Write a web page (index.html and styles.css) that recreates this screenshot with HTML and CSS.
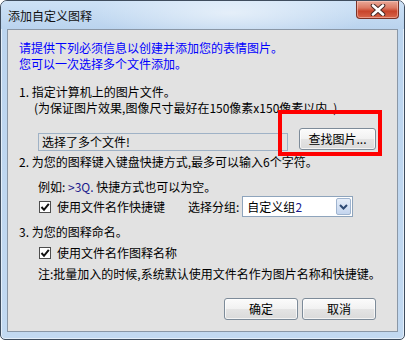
FILE: index.html
```html
<!DOCTYPE html>
<html lang="zh-CN">
<head>
<meta charset="utf-8">
<link rel="stylesheet" href="styles.css">
</head>
<body>
<div class="window">
  <div class="titlebar">
    <span class="title">添加自定义图释</span>
    <span class="close">
      <svg width="16" height="12" viewBox="0 0 16 12">
        <path d="M3 1.5 L13 10.5 M13 1.5 L3 10.5" stroke="#4a2a26" stroke-width="4.6" stroke-linecap="round"/>
        <path d="M3 1.5 L13 10.5 M13 1.5 L3 10.5" stroke="#ffffff" stroke-width="2.6" stroke-linecap="round"/>
      </svg>
    </span>
  </div>
  <div class="panel">
    <div class="intro">请提供下列必须信息以创建并添加您的表情图片。<br>您可以一次选择多个文件添加。</div>
    <div class="step s1">1. 指定计算机上的图片文件。</div>
    <div class="note">(为保证图片效果,图像尺寸最好在150像素x150像素以内。)</div>
    <div class="filerow">
      <div class="field">选择了多个文件!</div>
      <div class="btn browse">查找图片...</div>
    </div>
    <div class="step s2">2. 为您的图释键入键盘快捷方式,最多可以输入6个字符。</div>
    <div class="example">例如: <span class="code">&gt;3Q.</span> 快捷方式也可以为空。</div>
    <div class="optrow">
      <span class="check"><svg width="10" height="10" viewBox="0 0 10 10"><path d="M1.5 5 L4 7.8 L8.8 1.8" stroke="#111" stroke-width="2" fill="none"/></svg></span>
      <span class="label">使用文件名作快捷键</span>
      <span class="grouplabel">选择分组:</span>
      <div class="select">
        <span class="seltext">自定义组<span class="num">2</span></span>
        <span class="drop"><svg width="9" height="6" viewBox="0 0 9 6"><path d="M1 1 L4.5 4.5 L8 1" stroke="#2d4a73" stroke-width="2" fill="none"/></svg></span>
      </div>
    </div>
    <div class="step s3">3. 为您的图释命名。</div>
    <div class="optrow2">
      <span class="check"><svg width="10" height="10" viewBox="0 0 10 10"><path d="M1.5 5 L4 7.8 L8.8 1.8" stroke="#111" stroke-width="2" fill="none"/></svg></span>
      <span class="label">使用文件名作图释名称</span>
    </div>
    <div class="note2">注:批量加入的时候,系统默认使用文件名作为图片名称和快捷键。</div>
    <div class="buttons">
      <div class="btn">确定</div>
      <div class="btn">取消</div>
    </div>
    <div class="highlight"></div>
  </div>
</div>
</body>
</html>
```

FILE: styles.css
```css
html, body {
  margin: 0;
  padding: 0;
  background: #ffffff;
}
body {
  width: 405px;
  height: 340px;
  font-family: "Noto Sans CJK SC", "Noto Sans", sans-serif;
  font-size: 12px;
  color: #000;
}
.window {
  box-sizing: border-box;
  width: 405px;
  height: 340px;
  border: 1px solid #3f4d5e;
  border-radius: 7px 7px 5px 5px;
  background: linear-gradient(to bottom, #c4dbf3 0px, #bcd5ef 30px, #c2d9f1 100%);
  box-shadow: inset 0 0 0 1px #e4effa;
  display: flex;
  flex-direction: column;
  overflow: hidden;
}
.titlebar {
  height: 28px;
  display: flex;
  align-items: flex-start;
  padding-left: 7px;
  background:
    radial-gradient(ellipse 140px 30px at 230px 12px, rgba(255,255,255,0.55), rgba(255,255,255,0) 100%),
    linear-gradient(to bottom, #cde1f6, #bad3ee);
}
.title {
  margin-top: 7px;
  line-height: 16px;
  color: #111;
}
.close {
  margin-left: auto;
  margin-right: 5px;
  width: 43px;
  height: 18px;
  box-sizing: border-box;
  border: 1px solid #7b3226;
  border-top: none;
  border-radius: 0 0 4px 4px;
  background: linear-gradient(to bottom, #e9a999 0%, #dc7a64 40%, #c8442b 60%, #d8664b 100%);
  box-shadow: inset 0 0 0 1px rgba(255,210,200,0.5);
  display: flex;
  align-items: center;
  justify-content: center;
}
.panel {
  position: relative;
  flex: 1;
  margin: 0 6px 7px 6px;
  border: 1px solid #8a97a6;
  background: #e2e2e2;
}
.intro {
  margin: 10px 0 0 11px;
  line-height: 16px;
  color: #0000ff;
}
.step {
  margin-left: 11px;
  line-height: 16px;
}
.s1 { margin-top: 12px; }
.note {
  margin-left: 26px;
  line-height: 16px;
}
.filerow {
  display: flex;
  align-items: flex-start;
  margin: 12px 0 0 30px;
  height: 22px;
}
.field {
  box-sizing: border-box;
  width: 250px;
  height: 18px;
  margin-top: 5px;
  border: 1px solid #9fb2c6;
  padding-left: 3px;
  line-height: 16px;
}
.btn {
  box-sizing: border-box;
  width: 74px;
  height: 22px;
  border: 1px solid #7d8b99;
  border-radius: 3px;
  background: linear-gradient(to bottom, #fbfbfb 0%, #f1f1f1 50%, #e4e4e4 51%, #dadada 100%);
  box-shadow: inset 0 0 0 1px rgba(255,255,255,0.7);
  text-align: center;
  line-height: 20px;
}
.browse {
  width: 77px;
  margin-left: 11px;
}
.s2 { margin-top: 4px; }
.example {
  margin: 9px 0 0 30px;
  line-height: 16px;
}
.code { color: #1a1a8c; }
.optrow {
  display: flex;
  align-items: center;
  height: 23px;
  margin-left: 31px;
}
.check {
  box-sizing: border-box;
  width: 12px;
  height: 12px;
  border: 1px solid #4d4d4d;
  background: #fff;
  display: flex;
  align-items: center;
  justify-content: center;
}
.label {
  margin-left: 6px;
  line-height: 16px;
}
.grouplabel {
  margin-left: 23px;
  line-height: 16px;
}
.select {
  box-sizing: border-box;
  width: 111px;
  height: 21px;
  margin-left: 3px;
  border: 1px solid #8ea4bc;
  background: #fff;
  display: flex;
  align-items: center;
  padding-left: 4px;
}
.seltext { flex: 1; line-height: 16px; }
.num { color: #1a1a8c; }
.drop {
  box-sizing: border-box;
  width: 15px;
  height: 17px;
  margin-right: 1px;
  border: 1px solid #9fb4cf;
  border-radius: 2px;
  background: linear-gradient(to bottom, #e6eef9, #c4d5ee);
  display: flex;
  align-items: center;
  justify-content: center;
}
.s3 { margin-top: 6px; }
.optrow2 {
  display: flex;
  align-items: center;
  height: 16px;
  margin: 5px 0 0 31px;
}
.note2 {
  margin: 5px 0 0 30px;
  line-height: 16px;
}
.buttons {
  display: flex;
  justify-content: flex-end;
  gap: 4px;
  margin: 16px 21px 0 0;
}
.highlight {
  position: absolute;
  left: 270px;
  top: 80px;
  width: 104px;
  height: 46px;
  box-sizing: border-box;
  border: 4px solid #ff0000;
}
```
